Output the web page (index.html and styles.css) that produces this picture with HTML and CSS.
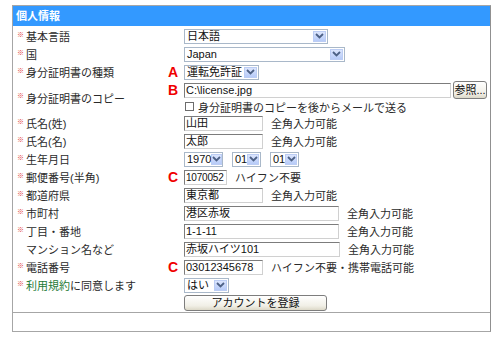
FILE: index.html
```html
<!DOCTYPE html>
<html lang="ja">
<head>
    <meta charset="UTF-8">
    <title>個人情報</title>
    <link rel="stylesheet" href="styles.css">
</head>
<body>

<div class="panel">
    <div class="panel-head">個人情報</div>

    <div class="form">
        <div class="row">
            <div class="label"><span class="req">※</span>基本言語</div>
            <div class="field">
                <div class="select w-lang"><span class="val">日本語</span><span class="arrow"><svg width="9" height="6" viewBox="0 0 9 6"><path d="M1 1l3.5 3.5L8 1" fill="none" stroke="#4d6185" stroke-width="1.8"/></svg></span></div>
            </div>
        </div>
        <div class="row">
            <div class="label"><span class="req">※</span>国</div>
            <div class="field">
                <div class="select w-country"><span class="val">Japan</span><span class="arrow"><svg width="9" height="6" viewBox="0 0 9 6"><path d="M1 1l3.5 3.5L8 1" fill="none" stroke="#4d6185" stroke-width="1.8"/></svg></span></div>
            </div>
        </div>
        <div class="row">
            <div class="label"><span class="req">※</span>身分証明書の種類<span class="mark">A</span></div>
            <div class="field">
                <div class="select w-idtype"><span class="val">運転免許証</span><span class="arrow"><svg width="9" height="6" viewBox="0 0 9 6"><path d="M1 1l3.5 3.5L8 1" fill="none" stroke="#4d6185" stroke-width="1.8"/></svg></span></div>
            </div>
        </div>
        <div class="row row-copy">
            <div class="label"><span class="req">※</span>身分証明書のコピー<span class="mark mark-top">B</span></div>
            <div class="field-stack">
                <div class="field">
                    <div class="input w-file">C:\license.jpg</div>
                    <button class="btn btn-browse">参照...</button>
                </div>
                <label class="check"><span class="box"></span>身分証明書のコピーを後からメールで送る</label>
            </div>
        </div>
        <div class="row">
            <div class="label"><span class="req">※</span>氏名(姓)</div>
            <div class="field"><div class="input w-mid">山田</div><span class="hint">全角入力可能</span></div>
        </div>
        <div class="row">
            <div class="label"><span class="req">※</span>氏名(名)</div>
            <div class="field"><div class="input w-mid">太郎</div><span class="hint">全角入力可能</span></div>
        </div>
        <div class="row">
            <div class="label"><span class="req">※</span>生年月日</div>
            <div class="field field-date">
                <div class="select w-year"><span class="val">1970</span><span class="arrow"><svg width="9" height="6" viewBox="0 0 9 6"><path d="M1 1l3.5 3.5L8 1" fill="none" stroke="#4d6185" stroke-width="1.8"/></svg></span></div>
                <div class="select w-day"><span class="val">01</span><span class="arrow"><svg width="9" height="6" viewBox="0 0 9 6"><path d="M1 1l3.5 3.5L8 1" fill="none" stroke="#4d6185" stroke-width="1.8"/></svg></span></div>
                <div class="select w-day"><span class="val">01</span><span class="arrow"><svg width="9" height="6" viewBox="0 0 9 6"><path d="M1 1l3.5 3.5L8 1" fill="none" stroke="#4d6185" stroke-width="1.8"/></svg></span></div>
            </div>
        </div>
        <div class="row">
            <div class="label"><span class="req">※</span>郵便番号(半角)<span class="mark">C</span></div>
            <div class="field"><div class="input w-zip">1070052</div><span class="hint">ハイフン不要</span></div>
        </div>
        <div class="row">
            <div class="label"><span class="req">※</span>都道府県</div>
            <div class="field"><div class="input w-mid">東京都</div><span class="hint">全角入力可能</span></div>
        </div>
        <div class="row">
            <div class="label"><span class="req">※</span>市町村</div>
            <div class="field"><div class="input w-long">港区赤坂</div><span class="hint">全角入力可能</span></div>
        </div>
        <div class="row">
            <div class="label"><span class="req">※</span>丁目・番地</div>
            <div class="field"><div class="input w-long">1-1-11</div><span class="hint">全角入力可能</span></div>
        </div>
        <div class="row">
            <div class="label"><span class="req req-none">※</span>マンション名など</div>
            <div class="field"><div class="input w-long2">赤坂ハイツ101</div><span class="hint">全角入力可能</span></div>
        </div>
        <div class="row">
            <div class="label"><span class="req">※</span>電話番号<span class="mark">C</span></div>
            <div class="field"><div class="input w-mid">03012345678</div><span class="hint">ハイフン不要・携帯電話可能</span></div>
        </div>
        <div class="row">
            <div class="label"><span class="req">※</span><a class="link">利用規約</a>に同意します</div>
            <div class="field">
                <div class="select w-agree"><span class="val">はい</span><span class="arrow"><svg width="9" height="6" viewBox="0 0 9 6"><path d="M1 1l3.5 3.5L8 1" fill="none" stroke="#4d6185" stroke-width="1.8"/></svg></span></div>
            </div>
        </div>
        <div class="row">
            <div class="label"></div>
            <div class="field"><button class="btn btn-submit">アカウントを登録</button></div>
        </div>
    </div>

    <div class="panel-foot"></div>
</div>

</body>
</html>
```

FILE: styles.css
```css
body {
    margin: 0;
    padding: 5px 9px 0 12px;
    background-color: #fff;
    font-family: "Liberation Sans", "Noto Sans CJK JP", sans-serif;
    font-size: 11px;
    color: #2a2a2a;
}
.panel {
    width: 477px;
    border: 1px solid #a6a6a6;
    border-right-color: #909090;
}
.panel-head {
    height: 20px;
    line-height: 20px;
    padding-left: 3px;
    background-color: #3399ff;
    color: #fff;
    font-weight: bold;
    font-size: 11px;
}
.form {
    padding-top: 1px;
}
.row {
    display: grid;
    grid-template-columns: 171px 1fr;
    height: 18px;
    align-items: center;
}
.row-copy {
    height: 33px;
}
.label {
    display: flex;
    align-items: center;
    padding-left: 4px;
    height: 100%;
    white-space: nowrap;
}
.req {
    width: 6px;
    margin-right: 3px;
    margin-bottom: 4px;
    color: #e0403a;
    font-size: 7px;
    line-height: 7px;
}
.req-none {
    visibility: hidden;
}
.link {
    color: #1d7a35;
}
.mark {
    margin-left: auto;
    margin-right: 6px;
    color: #f00000;
    font-weight: bold;
    font-size: 14px;
    font-family: "Liberation Sans", Arial, sans-serif;
}
.mark-top {
    align-self: flex-start;
    line-height: 18px;
}
.field {
    display: flex;
    align-items: center;
    gap: 8px;
    height: 18px;
}
.field-stack {
    display: flex;
    flex-direction: column;
    height: 100%;
}
.field-date {
    gap: 9px;
}
.input {
    box-sizing: border-box;
    height: 15px;
    line-height: 13px;
    padding: 0 1px;
    border: 1px solid;
    border-color: #7c7c7c #d0d0d0 #d0d0d0 #7c7c7c;
    background: #fff;
    color: #111;
    white-space: nowrap;
    overflow: hidden;
}
.w-mid { width: 79px; }
.w-zip { width: 43px; font-size: 10px; letter-spacing: -0.2px; }
.w-long { width: 155px; }
.w-long2 { width: 156px; }
.w-file { width: 267px; }
.select {
    box-sizing: border-box;
    display: flex;
    align-items: center;
    height: 15px;
    border: 1px solid #a9b8c9;
    background: #fff;
    color: #111;
    padding: 0 1px 0 2px;
}
.select .val {
    flex: 1;
    line-height: 13px;
}
.select .arrow {
    display: flex;
    align-items: center;
    justify-content: center;
    width: 13px;
    height: 11px;
    background: linear-gradient(#dbe5fd, #b7cbf8);
    border: 1px solid #bccdf4;
    box-sizing: border-box;
}
.w-lang { width: 144px; }
.w-country { width: 161px; }
.w-idtype { width: 75px; }
.w-year { width: 39px; }
.w-day { width: 29px; }
.w-agree { width: 45px; }
.btn {
    box-sizing: border-box;
    font-family: "Liberation Sans", "Noto Sans CJK JP", sans-serif;
    font-size: 11px;
    color: #111;
    border: 1px solid #7d7d7d;
    border-radius: 3px;
    background: linear-gradient(#ffffff, #f1efe6 70%, #dcd8c8);
    padding: 0;
    line-height: 13px;
}
.btn-browse {
    width: 34px;
    height: 18px;
    margin-left: -6px;
}
.btn-submit {
    width: 143px;
    height: 16px;
}
.check {
    display: flex;
    align-items: center;
    height: 15px;
    white-space: nowrap;
}
.check .box {
    box-sizing: border-box;
    width: 9px;
    height: 9px;
    margin: 0 4px 0 1px;
    border: 1px solid #6c6c6c;
    background: #fff;
}
.panel-foot {
    height: 18px;
    border-top: 1px solid #a6a6a6;
}
```
